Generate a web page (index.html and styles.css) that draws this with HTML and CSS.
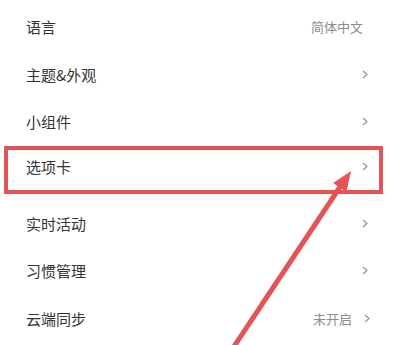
FILE: index.html
```html
<!DOCTYPE html>
<html lang="zh-CN">
<head>
  <meta charset="utf-8">
  <meta name="viewport" content="width=device-width, initial-scale=1">
  <title>设置</title>
  <link rel="stylesheet" href="styles.css">
</head>
<body>
  <div class="settings-list">
    <div class="row">
      <span class="label">语言</span>
      <span class="value value-only">简体中文</span>
    </div>
    <div class="row">
      <span class="label">主题&amp;外观</span>
      <svg class="chevron" viewBox="0 0 6 9"><polyline points="1,1 5,4.5 1,8"/></svg>
    </div>
    <div class="row">
      <span class="label">小组件</span>
      <svg class="chevron" viewBox="0 0 6 9"><polyline points="1,1 5,4.5 1,8"/></svg>
    </div>
    <div class="row row-marked">
      <span class="label">选项卡</span>
      <svg class="chevron" viewBox="0 0 6 9"><polyline points="1,1 5,4.5 1,8"/></svg>
    </div>
    <div class="row">
      <span class="label">实时活动</span>
      <svg class="chevron" viewBox="0 0 6 9"><polyline points="1,1 5,4.5 1,8"/></svg>
    </div>
    <div class="row">
      <span class="label">习惯管理</span>
      <svg class="chevron" viewBox="0 0 6 9"><polyline points="1,1 5,4.5 1,8"/></svg>
    </div>
    <div class="row row-sync">
      <span class="label">云端同步</span>
      <span class="right">
        <span class="value">未开启</span>
        <svg class="chevron" viewBox="0 0 6 9"><polyline points="1,1 5,4.5 1,8"/></svg>
      </span>
    </div>
  </div>

  <!-- 标注箭头 -->
  <svg class="arrow" viewBox="0 0 398 345">
    <line x1="233" y1="348" x2="340" y2="187" />
    <polygon points="351,171 346.4,192.1 333.2,183.1" />
  </svg>
</body>
</html>
```

FILE: styles.css
```css
body {
  margin: 0;
  background: #fff;
  font-family: "Noto Sans CJK SC", "Noto Sans", sans-serif;
  position: relative;
  height: 345px;
  overflow: hidden;
}

.settings-list {
  padding-top: 3px;
}

.row {
  height: 47.5px;
  display: flex;
  align-items: center;
  justify-content: space-between;
  padding: 0 30px 0 26px;
  box-sizing: border-box;
}

.label {
  font-size: 15px;
  color: #333;
}

.value {
  font-size: 13px;
  color: #8c8c8c;
}

.value-only {
  margin-right: 5px;
}

.right {
  display: flex;
  align-items: center;
  gap: 12px;
}

.row-sync {
  padding-right: 28px;
}

.chevron {
  width: 6px;
  height: 9px;
  fill: none;
  stroke: #8f8f8f;
  stroke-width: 1.1;
}

/* 红框标出的那一行 */
.row-marked {
  margin: 0 15px 6px 4px;
  padding: 0 11px 7px 18px;
  border: 4px solid #e55454;
  height: 48px;
}

.arrow {
  position: absolute;
  left: 0;
  top: 0;
  width: 398px;
  height: 345px;
  pointer-events: none;
}

.arrow line {
  stroke: #e55454;
  stroke-width: 5;
}

.arrow polygon {
  fill: #e55454;
}
```
